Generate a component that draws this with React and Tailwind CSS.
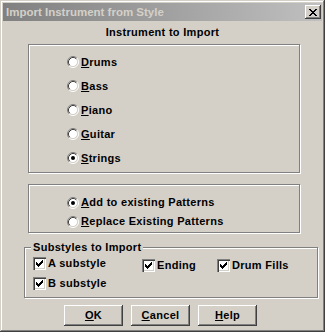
import React from 'react';

const font = { fontFamily: '"Liberation Sans", Arial, sans-serif' };

const Mn = ({ text, u = true }) =>
  u ? (<><span className="underline underline-offset-[1px]">{text[0]}</span>{text.slice(1)}</>) : text;

const Radio = ({ checked }) => (
  <svg width="12" height="12" viewBox="0 0 12 12" className="shrink-0">
    <circle cx="6" cy="6" r="4.5" fill="#fff" />
    <path d="M2.11 9.89 A5.5 5.5 0 0 1 9.89 2.11" stroke="#808080" fill="none" />
    <path d="M9.89 2.11 A5.5 5.5 0 0 1 2.11 9.89" stroke="#fff" fill="none" />
    <path d="M2.82 9.18 A4.5 4.5 0 0 1 9.18 2.82" stroke="#404040" fill="none" />
    <path d="M9.18 2.82 A4.5 4.5 0 0 1 2.82 9.18" stroke="#d4d0c8" fill="none" />
    {checked && <circle cx="6" cy="6" r="2" fill="#000" />}
  </svg>
);

const Check = () => (
  <div className="w-[13px] h-[13px] shrink-0 bg-white shadow-[inset_1px_1px_#808080,inset_2px_2px_#404040,inset_-1px_-1px_#fff,inset_-2px_-2px_#d4d0c8]">
    <svg width="13" height="13" viewBox="0 0 13 13" shapeRendering="crispEdges">
      {[2, 3, 4, 3, 2, 1, 0].map((y, i) => (
        <rect key={i} x={3 + i} y={3 + y} width="1" height="3" fill="#000" />
      ))}
    </svg>
  </div>
);

const RadioRow = ({ label, checked, h }) => (
  <div className={`flex items-center gap-[2px] ${h}`}>
    <Radio checked={checked} />
    <span className="text-[11px] font-bold leading-none tracking-[0.3px]"><Mn text={label} /></span>
  </div>
);

const CheckRow = ({ label }) => (
  <div className="flex items-center gap-[2px] h-[16px]">
    <Check />
    <span className="text-[11px] font-bold leading-none tracking-[0.3px]">{label}</span>
  </div>
);

const Btn = ({ label }) => (
  <button className="w-[59px] h-[21px] bg-[#d4d0c8] text-[11px] font-bold tracking-[0.3px] text-black shadow-[inset_-1px_-1px_#404040,inset_1px_1px_#fff,inset_-2px_-2px_#808080]">
    <Mn text={label} />
  </button>
);

const etched = 'border border-[#808080] shadow-[1px_1px_0_#fff,inset_1px_1px_0_#fff]';

export default function App() {
  return (
    <div style={font} className="w-[325px] h-[332px] bg-[#d4d0c8] p-[3px] flex flex-col text-black shadow-[inset_-1px_-1px_#404040,inset_1px_1px_#d4d0c8,inset_-2px_-2px_#808080,inset_2px_2px_#fff]">
      <div className="h-[18px] flex items-start justify-between bg-gradient-to-r from-[#808080] to-[#c0c0c0]">
        <span className="ml-[3px] mt-[2px] text-[11.5px] font-bold leading-[14px] text-[#d4d0c8]">Import Instrument from Style</span>
        <div className="mt-[2px] mr-[1px] w-[16px] h-[14px] bg-[#d4d0c8] flex items-center justify-center shadow-[inset_-1px_-1px_#404040,inset_1px_1px_#fff,inset_-2px_-2px_#808080]">
          <svg width="8" height="7" viewBox="0 0 8 7" shapeRendering="crispEdges">
            <path d="M0 0h2v1h-2zM6 0h2v1h-2zM1 1h2v1h-2zM5 1h2v1h-2zM2 2h4v1h-4zM3 3h2v1h-2zM2 4h4v1h-4zM1 5h2v1h-2zM5 5h2v1h-2zM0 6h2v1h-2zM6 6h2v1h-2z" fill="#000" />
          </svg>
        </div>
      </div>

      <div className="mt-[4px] text-center text-[11px] font-bold leading-[14px] tracking-[0.3px]">Instrument to Import</div>

      <div className={`mt-[5px] ml-[25px] w-[272px] h-[129px] pt-[5px] pl-[38px] ${etched}`}>
        <RadioRow label="Drums" h="h-[24px]" />
        <RadioRow label="Bass" h="h-[24px]" />
        <RadioRow label="Piano" h="h-[24px]" />
        <RadioRow label="Guitar" h="h-[24px]" />
        <RadioRow label="Strings" checked h="h-[24px]" />
      </div>

      <div className={`mt-[11px] ml-[25px] w-[272px] h-[49px] pt-[8px] pl-[38px] ${etched}`}>
        <RadioRow label="Add to existing Patterns" checked h="h-[19px]" />
        <RadioRow label="Replace Existing Patterns" h="h-[19px]" />
      </div>

      <div className={`relative mt-[14px] ml-[21px] w-[294px] h-[51px] pt-[7px] pl-[8px] flex ${etched}`}>
        <span className="absolute left-[6px] top-[-7px] px-[2px] bg-[#d4d0c8] text-[11px] font-bold leading-[13px] tracking-[0.3px]">Substyles to Import</span>
        <div className="flex flex-col gap-[4px] w-[109px]">
          <CheckRow label="A substyle" />
          <CheckRow label="B substyle" />
        </div>
        <div className="mt-[2px] w-[75px]"><CheckRow label="Ending" /></div>
        <div className="mt-[2px]"><CheckRow label="Drum Fills" /></div>
      </div>

      <div className="mt-[7px] ml-[61px] flex gap-[8px]">
        <Btn label="OK" />
        <Btn label="Cancel" />
        <Btn label="Help" />
      </div>
    </div>
  );
}
